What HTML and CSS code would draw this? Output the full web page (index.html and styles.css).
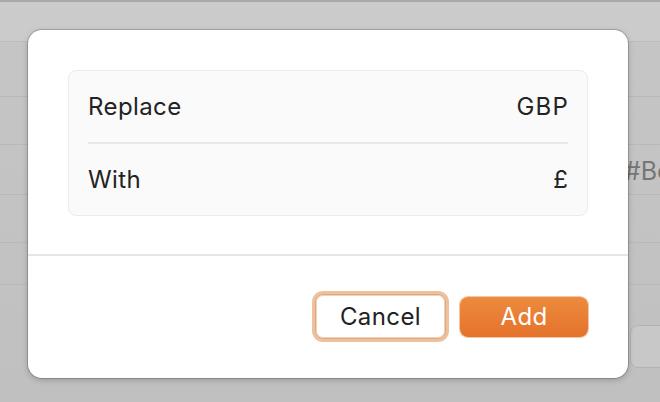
FILE: index.html
```html
<!DOCTYPE html>
<html>
<head>
<meta charset="utf-8">
<link rel="stylesheet" href="styles.css">
</head>
<body>
<div class="backdrop">
  <div class="bg-top"></div>
  <div class="bg-row h55"></div>
  <div class="bg-row h48"></div>
  <div class="bg-row h50"><span class="bg-text">#Bo</span></div>
  <div class="bg-row h48"></div>
  <div class="bg-row h42"></div>
  <div class="bg-rest"><div class="bg-box"></div></div>
</div>
<div class="dialog">
  <div class="dialog-body">
    <div class="group">
      <div class="group-row">
        <span class="label">Replace</span>
        <span class="value">GBP</span>
      </div>
      <div class="divider"></div>
      <div class="group-row">
        <span class="label">With</span>
        <span class="value">£</span>
      </div>
    </div>
  </div>
  <div class="dialog-footer">
    <div class="focus-ring"><button class="btn btn-cancel">Cancel</button></div>
    <button class="btn btn-add">Add</button>
  </div>
</div>
</body>
</html>
```

FILE: styles.css
```css
* { box-sizing: border-box; }
html, body { margin: 0; padding: 0; }
body {
  width: 660px;
  height: 402px;
  overflow: hidden;
  position: relative;
  font-family: Inter, "Open Sans", "Liberation Sans", sans-serif;
  background: linear-gradient(180deg, #c6c6c6 0%, #c0c0c0 100%);
}
.backdrop {
  display: flex;
  flex-direction: column;
  height: 402px;
}
.bg-top {
  height: 42px;
  border-top: 2px solid #a9a9a9;
  background: #cbcbcb;
  border-bottom: 1px solid #bdbdbd;
}
.bg-row {
  border-bottom: 1px solid #b9b9b9;
  display: flex;
  align-items: center;
  justify-content: flex-end;
}
.h55 { height: 55px; }
.h48 { height: 48px; }
.h50 { height: 50px; }
.h42 { height: 42px; }
.bg-text {
  font-size: 25px;
  color: #767676;
  margin-right: -12px;
  padding-top: 2px;
}
.bg-rest {
  flex: 1;
  display: flex;
  justify-content: flex-end;
  padding-top: 40px;
}
.bg-box {
  width: 40px;
  height: 43px;
  margin-right: -10px;
  border: 1px solid #b3b3b3;
  border-radius: 8px;
  background: #c8c8c8;
}
.dialog {
  position: absolute;
  left: 28px;
  top: 30px;
  width: 600px;
  height: 348px;
  background: #ffffff;
  border-radius: 14px;
  box-shadow: 0 0 0 1px rgba(0,0,0,0.18), 0 2px 6px rgba(0,0,0,0.22);
  display: flex;
  flex-direction: column;
}
.dialog-body {
  padding: 40px 40px 0 40px;
  height: 226px;
  border-bottom: 2px solid #e6e6e6;
}
.group {
  background: #fafafa;
  border: 1px solid #ececec;
  border-radius: 8px;
  padding: 0 19px;
  height: 146px;
  display: flex;
  flex-direction: column;
}
.group-row {
  flex: 1;
  display: flex;
  align-items: center;
  justify-content: space-between;
  font-size: 24px;
  letter-spacing: 0.4px;
  color: #232323;
}
.value { letter-spacing: 1.2px; margin-right: -1px; }
.divider {
  height: 2px;
  background: #e8e8e8;
}
.dialog-footer {
  display: flex;
  justify-content: flex-end;
  align-items: center;
  gap: 11px;
  padding: 35px 40px 0 0;
}
.focus-ring {
  padding: 3px;
  border-radius: 11px;
  background: #eec19c;
}
.btn {
  font-family: inherit;
  font-size: 24px;
  letter-spacing: 0.4px;
  height: 40px;
  border-radius: 8px;
  border: none;
  margin: 0;
  padding: 0;
}
.btn-cancel {
  width: 131px;
  height: 45px;
  background: #fff;
  color: #222;
  border: 1px solid #d9a884;
  box-shadow: inset 0 0 0 1px #f3d3b8;
}
.btn-add {
  width: 128px;
  color: #fff;
  background: linear-gradient(180deg, #ec8b3d 0%, #e5722b 100%);
  box-shadow: 0 0 0 1px rgba(226,110,40,0.4);
}
```
